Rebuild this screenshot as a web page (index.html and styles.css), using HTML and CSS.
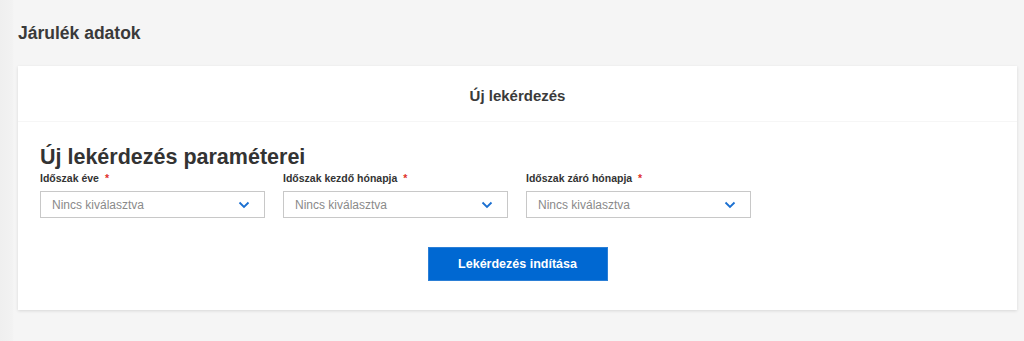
FILE: index.html
```html
<!DOCTYPE html>
<html lang="hu">
<head>
<meta charset="utf-8">
<link rel="stylesheet" href="styles.css">
</head>
<body>
<div class="page">
  <h1 class="page-title">Járulék adatok</h1>
  <div class="card">
    <div class="card-header">Új lekérdezés</div>
    <div class="card-body">
      <h2 class="section-title">Új lekérdezés paraméterei</h2>
      <div class="fields">
        <div class="field">
          <label class="field-label">Időszak éve <span class="req">*</span></label>
          <div class="select"><span class="placeholder">Nincs kiválasztva</span>
            <svg class="chev" width="12" height="8" viewBox="0 0 12 8"><path d="M1.5 1.5 L6 6 L10.5 1.5" fill="none" stroke="#1a6fd1" stroke-width="1.8"/></svg>
          </div>
        </div>
        <div class="field">
          <label class="field-label">Időszak kezdő hónapja <span class="req">*</span></label>
          <div class="select"><span class="placeholder">Nincs kiválasztva</span>
            <svg class="chev" width="12" height="8" viewBox="0 0 12 8"><path d="M1.5 1.5 L6 6 L10.5 1.5" fill="none" stroke="#1a6fd1" stroke-width="1.8"/></svg>
          </div>
        </div>
        <div class="field">
          <label class="field-label">Időszak záró hónapja <span class="req">*</span></label>
          <div class="select"><span class="placeholder">Nincs kiválasztva</span>
            <svg class="chev" width="12" height="8" viewBox="0 0 12 8"><path d="M1.5 1.5 L6 6 L10.5 1.5" fill="none" stroke="#1a6fd1" stroke-width="1.8"/></svg>
          </div>
        </div>
      </div>
      <div class="actions">
        <button class="btn">Lekérdezés indítása</button>
      </div>
    </div>
  </div>
</div>
</body>
</html>
```

FILE: styles.css
```css
* { box-sizing: border-box; }
html, body { margin: 0; padding: 0; }
body {
  background: #f5f5f5;
  font-family: "Liberation Sans", Arial, sans-serif;
  color: #333;
  height: 341px;
  overflow: hidden;
}
.page {
  min-height: 341px;
  padding: 22px 7px 0 18px;
  background: linear-gradient(to right, #efefef 0, #f2f2f2 12px, #f5f5f5 14px);
}
.page-title {
  margin: 0 0 22px 0;
  font-size: 17.5px;
  font-weight: bold;
  line-height: 22px;
  color: #3a3a3a;
}
.card {
  background: #fff;
  box-shadow: 0 1px 3px rgba(0,0,0,0.12);
  height: 244px;
}
.card-header {
  height: 56px;
  display: flex;
  align-items: center;
  justify-content: center;
  font-size: 15px;
  font-weight: bold;
  color: #3a3a3a;
  border-bottom: 1px solid #f6f6f6;
  padding-top: 3px;
}
.card-body {
  padding: 23px 22px 0 22px;
}
.section-title {
  margin: 0;
  font-size: 21.5px;
  line-height: 24px;
  font-weight: bold;
  color: #333;
}
.fields {
  display: flex;
  gap: 18px;
  margin-top: 2px;
}
.field {
  width: 225px;
}
.field-label {
  display: block;
  font-size: 10.5px;
  font-weight: bold;
  line-height: 14px;
  color: #333;
  margin-bottom: 6px;
}
.req { color: #e0302a; margin-left: 3px; }
.select {
  height: 27px;
  border: 1px solid #c8c8c8;
  display: flex;
  align-items: center;
  justify-content: space-between;
  padding: 0 14px 0 11px;
  background: #fff;
}
.placeholder {
  font-size: 12px;
  color: #8a8a8a;
}
.chev { display: block; }
.actions {
  display: flex;
  justify-content: center;
  margin-top: 29px;
}
.btn {
  width: 180px;
  height: 34px;
  background: #0068d2;
  border: 1px solid #2b7fd6;
  color: #fff;
  font-family: "Liberation Sans", Arial, sans-serif;
  font-size: 12.5px;
  font-weight: bold;
  cursor: pointer;
}
```
